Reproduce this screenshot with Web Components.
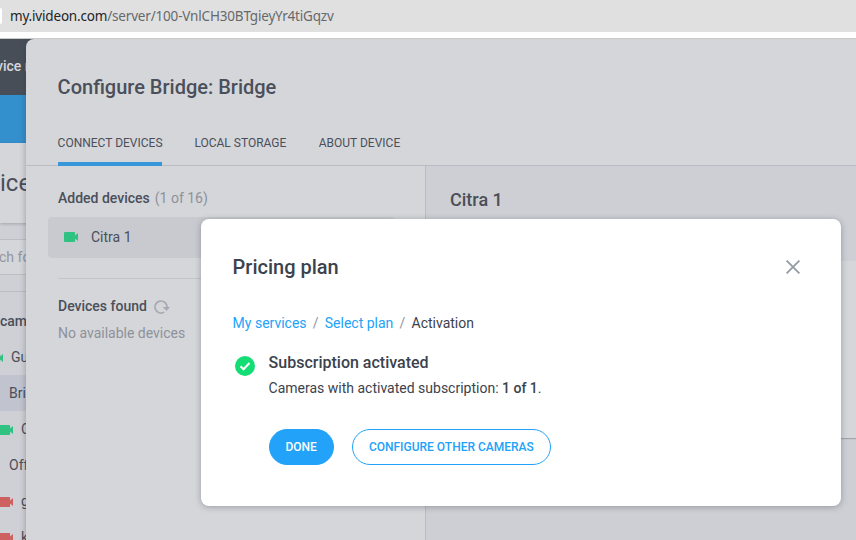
<!DOCTYPE html>
<html lang="en">
<head>
<meta charset="utf-8">
<title>Configure Bridge</title>
<style>
    body {
        margin: 0;
        width: 856px;
        height: 540px;
        overflow: hidden;
        background: #fff;
        font-family: Roboto, "Liberation Sans", sans-serif;
        font-size: 14px;
        color: #4a4f5a;
    }
</style>
</head>
<body>
<bridge-app></bridge-app>

<script>
class BaseElement extends HTMLElement {
    constructor() {
        super();
        this.attachShadow({ mode: "open" });
    }

    connectedCallback() {
        const template = document.createElement('template');
        template.innerHTML = `<style>${this.getStyles()}</style>${this.getTemplate()}`;
        this.shadowRoot.appendChild(template.content.cloneNode(true));
    }
}

class AddressBar extends BaseElement {
    getTemplate() {
        return `<div><slot name="host"></slot><slot name="path"></slot></div>`;
    }

    getStyles() {
        return `
            :host {
                display: flex;
                align-items: center;
                height: 32px;
                background: #e0e0e0;
                border-bottom: 6px solid #fff;
                font: 13.500px/20px "Noto Sans", "Open Sans", sans-serif;
                color: #66696c;
            }
            :host::before {
                content: "";
                width: 2px;
                height: 16px;
                border-radius: 0 8px 8px 0;
                background: #fff;
            }
            div { margin: -1px 0 0 8px; white-space: nowrap; letter-spacing: -0.180px; }
            ::slotted([slot=host]) { color: #222326; }
        `;
    }
}

class CameraIcon extends BaseElement {
    getTemplate() {
        return `<svg width="14" height="10" viewBox="0 0 14 10"><path fill="currentColor" d="M1 0h9.2q.9 0 .9.9V3.600L14 .9v8.200L11.100 6.400v2.700q0 .9-.9.9H1q-1 0-1-1V1q0-1 1-1z"/></svg>`;
    }

    getStyles() {
        return `
            :host { display: block; flex: none; width: 14px; height: 10px; color: #2fc280; }
            :host([offline]) { color: #cf6060; }
            svg { display: block; }
        `;
    }
}

class SideItem extends BaseElement {
    getTemplate() {
        return `<slot name="icon"></slot><span><slot></slot></span>`;
    }

    getStyles() {
        return `
            :host {
                display: flex;
                align-items: center;
                gap: 8px;
                height: 36px;
                padding-left: 9px;
                white-space: nowrap;
            }
            :host([camera]) { padding-left: 0; margin-left: -1px; }
            :host([near]) { margin-left: -11px; }
            :host([selected]) { background: #c1c4ce; }
            ::slotted([slot=icon]) { margin-top: 2px; }
        `;
    }
}

class SidePage extends BaseElement {
    getTemplate() {
        return `
            <header>vice m</header>
            <div class="banner"></div>
            <h1>ice</h1>
            <div class="search"><div class="input">ch fo</div></div>
            <div class="group">cam</div>
            <slot></slot>
        `;
    }

    getStyles() {
        return `
            :host {
                display: block;
                flex: none;
                width: 34px;
                overflow: hidden;
                background: #cfd0d5;
            }
            header {
                height: 56px;
                line-height: 54px;
                background: #484e58;
                color: #d5d6da;
                font-weight: 500;
                white-space: nowrap;
                text-indent: -4px;
            }
            .banner { height: 48px; background: #348fcd; }
            h1 {
                margin: 0;
                height: 80px;
                line-height: 80px;
                background: #d5d6da;
                box-shadow: 0 1px 3px rgba(60, 65, 85, .3);
                font-size: 24px;
                font-weight: 400;
            }
            .search { padding: 16px 0; border-bottom: 1px solid #bcbec5; }
            .input {
                height: 34px;
                line-height: 34px;
                border: solid #bcbec5;
                border-width: 1px 0;
                background: #d5d6da;
                color: #92959e;
                white-space: nowrap;
                text-indent: -1px;
            }
            .group {
                height: 47px;
                line-height: 59px;
                font-weight: 500;
            }
        `;
    }
}

class TabItem extends BaseElement {
    getTemplate() {
        return `<slot></slot>`;
    }

    getStyles() {
        return `
            :host {
                box-sizing: border-box;
                height: 47px;
                line-height: 49px;
                margin-bottom: -1px;
                font-size: 12px;
                white-space: nowrap;
            }
            :host([active]) { width: 104px; text-indent: -0.400px; border-bottom: 4px solid #3797d9; }
        `;
    }
}

class DeviceList extends BaseElement {
    getTemplate() {
        return `
            <div class="heading"><b>Added devices</b><span>(1 of 16)</span></div>
            <div class="device"><camera-icon></camera-icon><span>Citra 1</span></div>
            <hr>
            <div class="heading found"><b>Devices found</b>
                <svg width="16" height="14" viewBox="0 0 16 14" fill="none">
                    <path d="M10.200 12.100A6 6 0 1 1 13 7.200" stroke="#a6aab3" stroke-width="1.700"/>
                    <path d="M8.700 6.900H16L12.500 11z" fill="#a6aab3"/>
                </svg>
            </div>
            <div class="empty">No available devices</div>
        `;
    }

    getStyles() {
        return `
            :host {
                display: block;
                box-sizing: border-box;
                width: 400px;
                padding: 22px 30px 0 32px;
                border-right: 1px solid #b9bbc5;
            }
            b { font-weight: 500; }
            .heading { display: flex; align-items: center; gap: 5px; height: 20px; }
            .heading span, .empty { color: #8e919a; }
            .device {
                display: flex;
                align-items: center;
                gap: 13px;
                height: 41px;
                margin: 9px 0 0 -10px;
                padding-left: 16px;
                border-radius: 4px;
                background: #c9cacf;
            }
            .device span { margin-top: -2px; }
            .device camera-icon { margin-top: -1px; }
            hr { margin: 20px 0 17px; border: 0; border-top: 1px solid #c3c5cc; }
            .found { gap: 7px; }
            .found svg { margin-top: 1px; }
            .empty { margin-top: 7px; line-height: 20px; }
        `;
    }
}

class DeviceDetails extends BaseElement {
    getTemplate() {
        return `<h2>Citra 1</h2><div class="card"></div>`;
    }

    getStyles() {
        return `
            :host { display: block; flex: 1; padding-left: 24px; background: #cecfd4; }
            h2 { margin: 0; height: 95px; line-height: 68px; font-size: 18px; font-weight: 500; }
            .card {
                height: 177px;
                background: #d5d6da;
                box-shadow: 0 1px 1px rgba(60, 65, 85, .3);
            }
        `;
    }
}

class BridgeDrawer extends BaseElement {
    getTemplate() {
        return `
            <h1>Configure Bridge: Bridge</h1>
            <nav><slot></slot></nav>
            <main>
                <device-list></device-list>
                <device-details></device-details>
            </main>
        `;
    }

    getStyles() {
        return `
            :host {
                display: flex;
                flex-direction: column;
                flex: 1;
                min-width: 0;
                position: relative;
                margin-left: -8px;
                border-radius: 8px 0 0 0;
                background: #d5d6da;
                box-shadow: 0 0 6px rgba(40, 45, 60, .35);
            }
            h1 { margin: 0; height: 80px; line-height: 96px; padding-left: 31.600px; font-size: 20px; font-weight: 500; }
            nav {
                display: flex;
                gap: 32.400px;
                height: 46px;
                padding-left: 32px;
                border-bottom: 1px solid #b9bbc5;
            }
            main { display: flex; flex: 1; }
        `;
    }
}

class PillButton extends BaseElement {
    getTemplate() {
        return `<button><slot></slot></button>`;
    }

    getStyles() {
        return `
            :host { display: block; }
            button {
                box-sizing: border-box;
                height: 36px;
                padding: 0 16.500px 0 15.500px;
                border: 1px solid #22a2f8;
                border-radius: 18px;
                background: #fff;
                color: #22a2f8;
                font: 500 12px Roboto, sans-serif;
                white-space: nowrap;
            }
            :host([primary]) button { background: #22a2f8; color: #fff; }
        `;
    }
}

class PlanModal extends BaseElement {
    getTemplate() {
        return `
            <header>
                <slot name="title"></slot>
                <svg width="14" height="14" viewBox="0 0 14 14"><path d="M.6.6l12.800 12.800M13.400.6L.6 13.400" stroke="#949ba5" stroke-width="1.800"/></svg>
            </header>
            <nav>
                <a>My services</a><i>/</i><a>Select plan</a><i>/</i><span>Activation</span>
            </nav>
            <section>
                <svg width="20" height="20" viewBox="0 0 20 20"><circle cx="10" cy="10" r="10" fill="#14dd76"/><path d="M5.500 10.300l3 3 6-6.300" fill="none" stroke="#fff" stroke-width="2"/></svg>
                <div>
                    <slot name="status"></slot>
                    <slot name="body"></slot>
                    <footer><slot name="actions"></slot></footer>
                </div>
            </section>
        `;
    }

    getStyles() {
        return `
            :host {
                position: absolute;
                left: 201px;
                top: 219px;
                box-sizing: border-box;
                width: 640px;
                height: 287px;
                padding: 36px 32px 0 31.600px;
                border-radius: 8px;
                background: #fff;
                box-shadow: 0 1px 6px rgba(40, 45, 60, .35);
                color: #3c424d;
            }
            header { display: flex; justify-content: space-between; align-items: center; height: 24px; padding-right: 9px; }
            nav { display: flex; margin-top: 34px; line-height: 20px; }
            i { width: 18.200px; text-align: center; font-style: normal; color: #92979f; }
            a { color: #22a2f8; }
            svg { display: block; flex: none; }
            section { display: flex; gap: 13.600px; margin: 20px 0 0 2.400px; }
            section svg { margin-top: 3px; }
            ::slotted([slot=title]) { margin: 0; font-size: 20px; font-weight: 500; }
            ::slotted([slot=status]) { margin: 0; font-size: 16px; font-weight: 500; line-height: 20px; }
            ::slotted([slot=body]) { margin: 5px 0 0; line-height: 20px; }
            footer { display: flex; gap: 18px; margin: 31px 0 0 .4px; }
        `;
    }
}

class BridgeApp extends BaseElement {
    getTemplate() {
        return `
            <address-bar><span slot="host">my.ivideon.com</span><span slot="path">/server/100-VnlCH30BTgieyYr4tiGqzv</span></address-bar>
            <div class="stage">
                <side-page>
                    <side-item camera near><camera-icon slot="icon"></camera-icon>Gu</side-item>
                    <side-item selected>Bri</side-item>
                    <side-item camera><camera-icon slot="icon"></camera-icon>C</side-item>
                    <side-item>Off</side-item>
                    <side-item camera><camera-icon slot="icon" offline></camera-icon>g</side-item>
                    <side-item camera><camera-icon slot="icon" offline></camera-icon>k</side-item>
                </side-page>
                <bridge-drawer>
                    <tab-item active>CONNECT DEVICES</tab-item>
                    <tab-item>LOCAL STORAGE</tab-item>
                    <tab-item>ABOUT DEVICE</tab-item>
                </bridge-drawer>
            </div>
            <plan-modal>
                <h2 slot="title">Pricing plan</h2>
                <h3 slot="status">Subscription activated</h3>
                <p slot="body">Cameras with activated subscription: <b>1 of 1</b>.</p>
                <pill-button slot="actions" primary>DONE</pill-button>
                <pill-button slot="actions">CONFIGURE OTHER CAMERAS</pill-button>
            </plan-modal>
        `;
    }

    getStyles() {
        return `
            :host { display: flex; flex-direction: column; position: relative; height: 540px; overflow: hidden; }
            .stage { display: flex; flex: 1; min-height: 0; overflow: hidden; border-top: 1px solid #c8cac9; }
            b { font-weight: 500; }
        `;
    }
}

customElements.define('address-bar', AddressBar);
customElements.define('camera-icon', CameraIcon);
customElements.define('side-item', SideItem);
customElements.define('side-page', SidePage);
customElements.define('tab-item', TabItem);
customElements.define('device-list', DeviceList);
customElements.define('device-details', DeviceDetails);
customElements.define('bridge-drawer', BridgeDrawer);
customElements.define('pill-button', PillButton);
customElements.define('plan-modal', PlanModal);
customElements.define('bridge-app', BridgeApp);
</script>
</body>
</html>
